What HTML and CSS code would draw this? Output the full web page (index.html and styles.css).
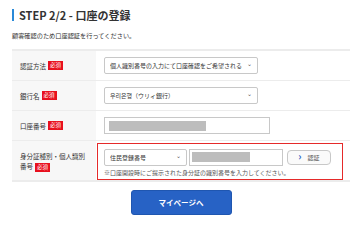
FILE: index.html
```html
<!DOCTYPE html>
<html lang="ja">
<head>
    <meta charset="UTF-8">
    <meta name="viewport" content="width=device-width, initial-scale=1.0">
    <title>口座の登録</title>
    <link rel="stylesheet" href="styles.css">
</head>
<body>
    <div class="container">
        <h1 class="title">STEP 2/2 - 口座の登録</h1>
        <p class="lead">顧客確認のため口座認証を行ってください。</p>

        <div class="form-table">
            <div class="row">
                <div class="label">認証方法<span class="req">必須</span></div>
                <div class="value">
                    <div class="select wide">
                        <span class="select-text">個人識別番号の入力にて口座確認をご希望される</span>
                        <span class="arrow">⌄</span>
                    </div>
                </div>
            </div>
            <div class="row">
                <div class="label">銀行名<span class="req">必須</span></div>
                <div class="value">
                    <div class="select wide">
                        <span class="select-text">우리은행（ウリィ銀行）</span>
                        <span class="arrow">⌄</span>
                    </div>
                </div>
            </div>
            <div class="row">
                <div class="label">口座番号<span class="req">必須</span></div>
                <div class="value">
                    <div class="input account"><span class="mask account-mask"></span></div>
                </div>
            </div>
            <div class="row tall">
                <div class="label">身分証種別・個人識別<br>番号<span class="req">必須</span></div>
                <div class="value">
                    <div class="error-box">
                        <div class="id-line">
                            <div class="select narrow">
                                <span class="select-text">住民登録番号</span>
                                <span class="arrow">⌄</span>
                            </div>
                            <div class="input idnum"><span class="mask id-mask"></span></div>
                            <button class="verify-btn"><span class="chev">›</span>認証</button>
                        </div>
                        <p class="note">※口座開設時にご提示された身分証の識別番号を入力してください。</p>
                    </div>
                </div>
            </div>
        </div>

        <div class="actions">
            <button class="mypage-btn">マイページへ</button>
        </div>
    </div>
</body>
</html>
```

FILE: styles.css
```css
:root {
    --text: #333333;
    --line: #ececec;
    --label-bg: #f7f7f7;
    --red: #e8101e;
    --blue: #2762c5;
}

* {
    margin: 0;
    padding: 0;
    box-sizing: border-box;
    font-family: "Noto Sans CJK JP", "Noto Sans CJK KR", sans-serif;
}

body {
    background-color: white;
    color: var(--text);
    overflow: hidden;
}

.container {
    width: 360px;
    padding: 9px 0 0 12px;
}

.title {
    font-size: 11px;
    font-weight: bold;
    line-height: 14px;
    padding-left: 5px;
    border-left: 2px solid #2a8ad8;
    height: 12px;
    display: flex;
    align-items: center;
}

.lead {
    font-size: 6.2px;
    margin-top: 10px;
    line-height: 10px;
}

.form-table {
    margin-top: 8px;
    border-top: 2px solid var(--line);
    border-bottom: 2px solid var(--line);
}

.row {
    display: flex;
    height: 30px;
    border-bottom: 1px solid var(--line);
}

.row:last-child {
    border-bottom: none;
}

.row.tall {
    height: 39px;
}

.label {
    width: 84px;
    background-color: var(--label-bg);
    font-size: 6.5px;
    line-height: 10px;
    padding: 0 4px 0 8px;
    display: flex;
    align-items: center;
}

.row.tall .label {
    display: block;
    padding-top: 10px;
}

.req {
    display: inline-block;
    background-color: var(--red);
    color: white;
    font-size: 5.5px;
    line-height: 9px;
    padding: 0 2px;
    margin-left: 2px;
    vertical-align: middle;
}

.value {
    flex: 1;
    display: flex;
    align-items: center;
    padding-left: 8px;
}

.select {
    height: 17px;
    border: 1px solid #c8c8c8;
    border-radius: 2px;
    background: white;
    display: flex;
    align-items: center;
    justify-content: space-between;
    padding: 0 5px;
    font-size: 6px;
}

.select.wide {
    width: 154px;
}

.select.narrow {
    width: 83px;
}

.select-text {
    white-space: nowrap;
    overflow: hidden;
    flex: 1;
}

.arrow {
    font-size: 6px;
    line-height: 6px;
    margin-top: -3px;
    padding-left: 4px;
    color: #555;
}

.input {
    height: 17px;
    border: 1px solid #c8c8c8;
    background: white;
    display: flex;
    align-items: center;
    padding: 0 4px;
}

.input.account {
    width: 166px;
}

.input.idnum {
    width: 94px;
    padding: 0 2px;
}

.mask {
    display: block;
    height: 10px;
    background-color: #bdbdbd;
}

.account-mask {
    width: 97px;
}

.id-mask {
    width: 58px;
}

.error-box {
    margin-left: -7px;
    margin-top: 1px;
    width: 246px;
    height: 37px;
    border: 1px solid #e52a2a;
    padding: 5px 0 0 6px;
}

.id-line {
    display: flex;
    align-items: center;
    gap: 2px;
}

.verify-btn {
    margin-left: 2px;
    width: 44px;
    height: 15px;
    border: 1px solid #c8c8c8;
    border-radius: 4px;
    background: #fafafa;
    font-size: 6px;
    color: #555;
    display: flex;
    align-items: center;
    justify-content: center;
    gap: 6px;
}

.chev {
    color: #2a62c4;
    font-size: 10px;
    font-weight: bold;
    line-height: 10px;
    margin-top: -2px;
}

.note {
    font-size: 6px;
    line-height: 9px;
    margin-top: 2px;
    color: #555;
}

.actions {
    width: 338px;
    display: flex;
    justify-content: center;
    margin-top: 8px;
}

.mypage-btn {
    width: 101px;
    height: 25px;
    background-color: var(--blue);
    color: white;
    border: 1px solid #1f56b0;
    border-radius: 3px;
    font-size: 7.5px;
    font-weight: bold;
}
```
